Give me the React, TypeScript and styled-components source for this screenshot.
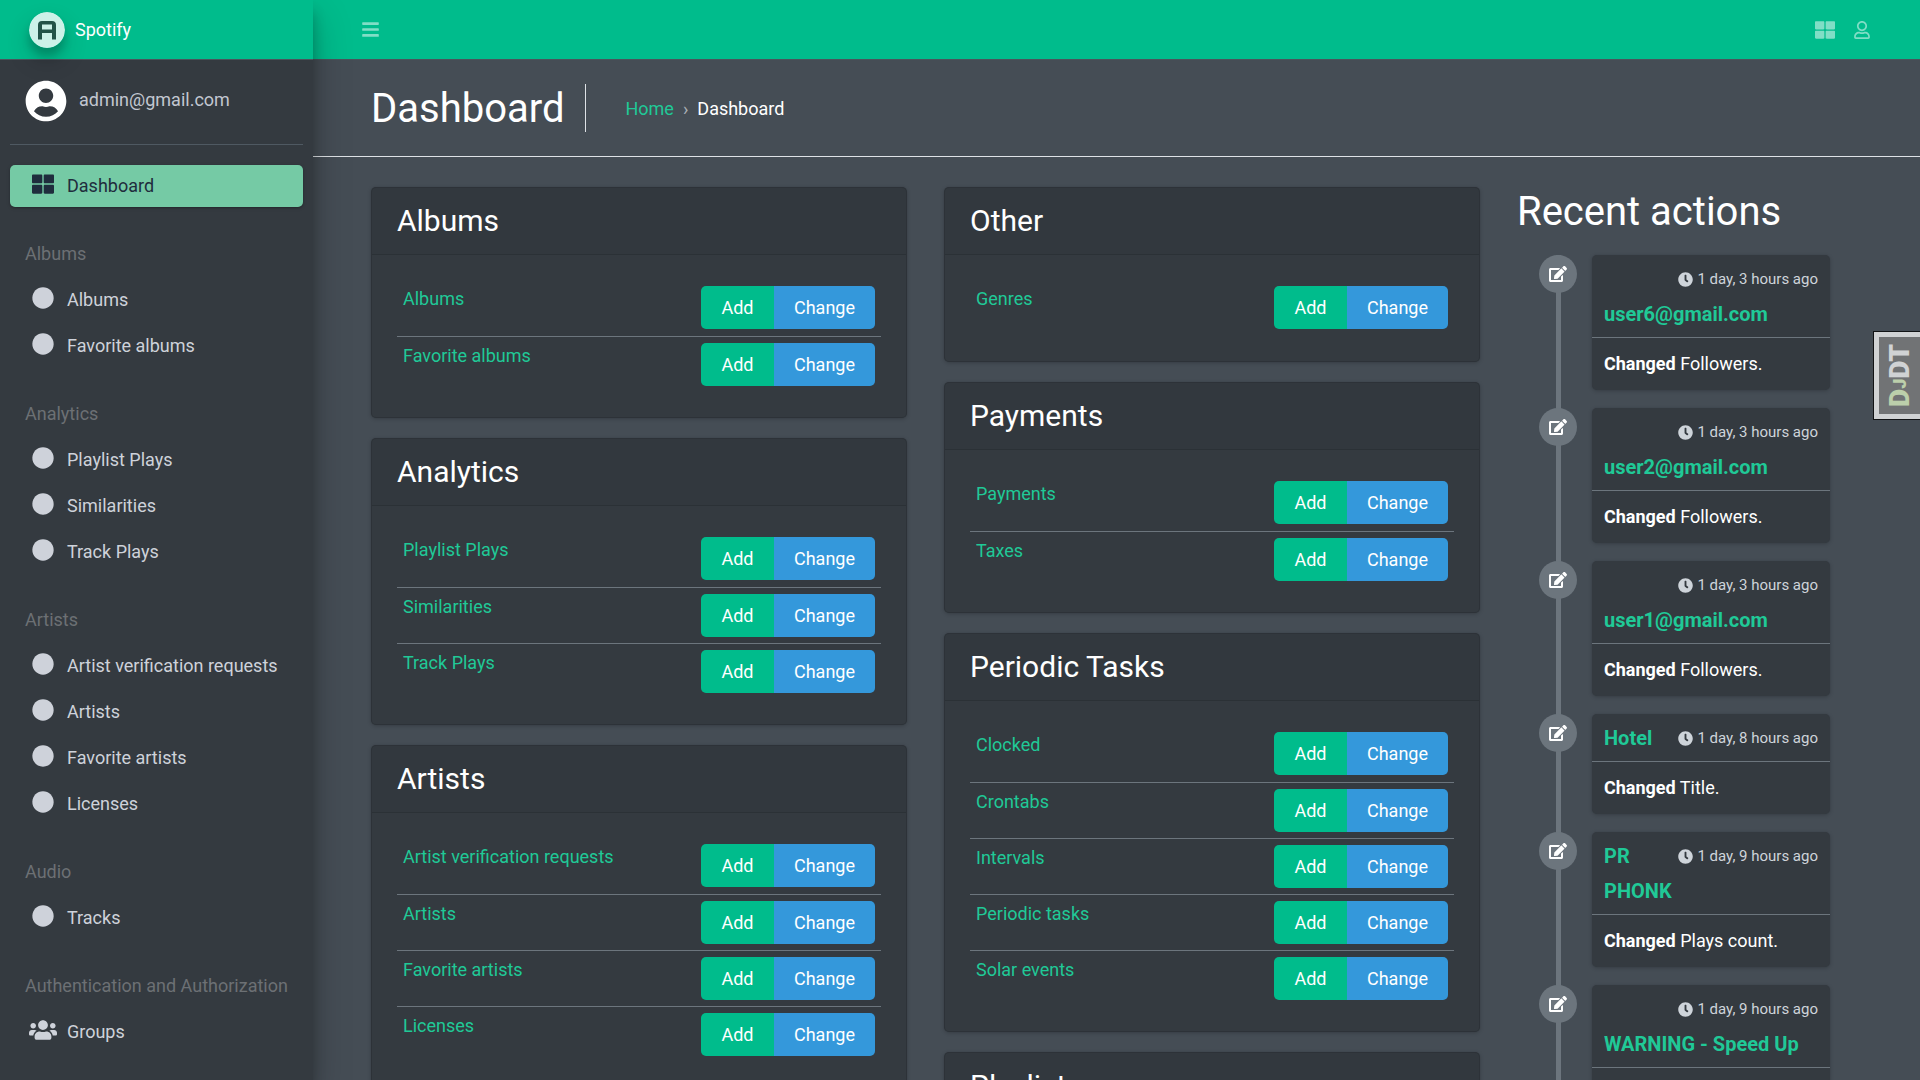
import React from 'react';
import styled, { createGlobalStyle } from 'styled-components';
import {
  FaBars,
  FaCircle,
  FaClock,
  FaEdit,
  FaRegUser,
  FaThLarge,
  FaUserCircle,
  FaUsers,
} from 'react-icons/fa';

const GlobalStyle = createGlobalStyle`
  *, *::before, *::after { box-sizing: border-box; }
  html, body { margin: 0; height: 100%; }
  body {
    background: #454d55;
    color: #fff;
    font: 400 18px/26px Roboto, "Liberation Sans", sans-serif;
  }
  h1, h2, h3, p, ul { margin: 0; padding: 0; font-weight: 400; }
  ul { list-style: none; }
  a { color: #20c997; text-decoration: none; }
  button { font: inherit; cursor: pointer; }
`;

const Shell = styled.div`
  display: grid;
  grid-template-columns: 313px minmax(0, 1fr);
  height: 100vh;
  overflow: hidden;
`;

const Sidebar = styled.aside`
  z-index: 1;
  overflow: hidden;
  background: #343a40;
  box-shadow: 0 18px 35px rgba(0, 0, 0, 0.25), 0 12px 12px rgba(0, 0, 0, 0.22);
`;

const Brand = styled.a`
  display: flex;
  align-items: center;
  gap: 10px;
  height: 60px;
  padding: 0 29px;
  background: #00bc8c;
  border-bottom: 1px solid #4b545c;
  color: #fff;
`;

const Logo = styled.svg`
  width: 36px;
  height: 36px;
  border-radius: 50%;
  opacity: 0.8;
  box-shadow: 0 12px 25px rgba(0, 0, 0, 0.19), 0 8px 8px rgba(0, 0, 0, 0.23);
`;

const UserPanel = styled.div`
  display: flex;
  align-items: center;
  gap: 12px;
  height: 85px;
  margin: 0 10px;
  padding: 0 15px 3px;
  border-bottom: 1px solid #4f5962;
`;

const UserLink = styled.a`
  padding-bottom: 1px;
  color: #c2c7d0;
`;

const Nav = styled.nav`
  padding: 20px 10px;
`;

const NavHeading = styled.li`
  height: 68px;
  padding: 30px 15px 12px;
  color: #6c7074;
  white-space: nowrap;
`;

const NavItem = styled.li`
  margin-bottom: 4px;
`;

const NavLink = styled.a<{ $active?: boolean }>`
  display: flex;
  align-items: center;
  gap: 8px;
  height: 42px;
  padding: 0 17px 1px;
  border-radius: 5px;
  color: ${(p) => (p.$active ? '#1f2d3d' : '#ced2da')};
  background: ${(p) => (p.$active ? '#75caa5' : 'transparent')};
  box-shadow: ${(p) =>
    p.$active ? '0 1px 4px rgba(0,0,0,.12), 0 1px 2px rgba(0,0,0,.24)' : 'none'};
`;

const NavIcon = styled.span`
  display: flex;
  justify-content: center;
  width: 32px;
  padding-bottom: 3px;
`;

const Main = styled.div`
  display: flex;
  flex-direction: column;
  min-width: 0;
  height: 100vh;
`;

const TopBar = styled.header`
  display: flex;
  flex: none;
  align-items: center;
  justify-content: space-between;
  height: 60px;
  padding: 0 49px 0 48px;
  background: #00bc8c;
  border-bottom: 1px solid #4b545c;
`;

const BarGroup = styled.div`
  display: flex;
  align-items: center;
  gap: 18px;
`;

const IconButton = styled.button`
  display: flex;
  padding: 0;
  border: 0;
  background: none;
  color: rgba(255, 255, 255, 0.5);
`;

const PageHeader = styled.div`
  display: flex;
  flex: none;
  align-items: center;
  padding: 24px 58px;
  border-bottom: 1px solid #dee2e6;
`;

const PageTitle = styled.h1`
  padding: 2px 21px 0 0;
  border-right: 1px solid #dee2e6;
  font-size: 40px;
  line-height: 46px;
`;

const Crumbs = styled.nav`
  display: flex;
  gap: 9px;
  padding: 1px 0 0 39px;
`;

const CrumbSeparator = styled.span`
  color: #aab0b6;
`;

const Content = styled.main`
  display: grid;
  flex: 1;
  grid-template-columns: 3fr 3fr 2fr;
  align-items: start;
  min-height: 0;
  padding: 30px 39px 0 40px;
  overflow-y: auto;
  scrollbar-width: none;
`;

const Column = styled.div`
  display: flex;
  flex-direction: column;
  gap: 20px;
  min-width: 0;
  padding: 0 19px 0 18px;
`;

const Card = styled.section`
  border: 1px solid rgba(0, 0, 0, 0.125);
  border-radius: 5px;
  background: #343a40;
  box-shadow: 0 0 1px rgba(0, 0, 0, 0.125), 0 1px 4px rgba(0, 0, 0, 0.2);
`;

const CardTitle = styled.h2`
  padding: 15px 25px;
  border-bottom: 1px solid rgba(0, 0, 0, 0.125);
  background: rgba(0, 0, 0, 0.03);
  font-size: 30px;
  line-height: 36px;
`;

const CardBody = styled.div`
  padding: 25px;
`;

const Table = styled.table`
  width: 100%;
  border-collapse: separate;
  border-spacing: 0;
`;

const Row = styled.tr`
  & > * {
    height: 56px;
    padding: 6px;
    border-top: 1px solid #6c757d;
    text-align: left;
    font-weight: 400;
    vertical-align: top;
  }
  &:first-child > * {
    border-top: 0;
  }
`;

const ActionCell = styled.td`
  width: 186px;
`;

const ButtonGroup = styled.div`
  display: flex;
  overflow: hidden;
  border-radius: 5px;
`;

const ActionButton = styled.button<{ $kind: 'add' | 'change' }>`
  flex: ${(p) => (p.$kind === 'add' ? '0 0 73px' : '1')};
  height: 43px;
  padding: 0;
  border: 0;
  background: ${(p) => (p.$kind === 'add' ? '#00bc8c' : '#3498db')};
  color: #fff;
`;

const SectionTitle = styled.h2`
  font-size: 40px;
  line-height: 50px;
`;

const RecentColumn = styled(Column)`
  gap: 18px;
`;

const Timeline = styled.ul`
  position: relative;
  display: flex;
  flex-direction: column;
  gap: 18px;
  padding-bottom: 18px;
  &::before {
    content: '';
    position: absolute;
    top: 0;
    bottom: 0;
    left: 39px;
    width: 5px;
    background: #6c757d;
  }
`;

const Entry = styled.li`
  display: flex;
  align-items: flex-start;
  gap: 15px;
  padding: 0 32px 0 22px;
`;

const EntryIcon = styled.span`
  z-index: 1;
  display: flex;
  flex: none;
  align-items: center;
  justify-content: center;
  width: 38px;
  height: 38px;
  border-radius: 50%;
  background: #6c757d;
`;

const EntryCard = styled.article`
  flex: 1;
  min-width: 0;
  border-radius: 5px;
  background: #343a40;
  box-shadow: 0 0 1px rgba(0, 0, 0, 0.125), 0 1px 4px rgba(0, 0, 0, 0.2);
`;

const EntryTime = styled.span`
  float: right;
  display: flex;
  align-items: center;
  gap: 4px;
  padding-left: 12px;
  color: #ced4da;
  font-size: 15px;
  font-weight: 400;
  line-height: 35px;
`;

const EntryTitle = styled.h3`
  padding: 7px 12px 5px;
  border-bottom: 1px solid #6c757d;
  font-size: 20px;
  font-weight: 700;
  line-height: 35px;
`;

const EntryText = styled.p`
  padding: 13px 12px;
`;

const DebugHandle = styled.button`
  position: fixed;
  z-index: 2;
  top: 331px;
  right: 0;
  display: flex;
  align-items: center;
  justify-content: center;
  width: 47px;
  height: 89px;
  padding: 0;
  border: 1px solid #000;
  border-right: 0;
  background: #fff;
  opacity: 0.75;
`;

const DebugInner = styled.span`
  display: flex;
  align-items: center;
  justify-content: center;
  width: 100%;
  height: 100%;
  border: 5px solid #fff;
  border-right: 0;
  background: #808080;
`;

const DebugText = styled.span`
  writing-mode: vertical-rl;
  transform: rotate(180deg);
  color: #fff;
  font: 900 28px/36px Roboto, "Liberation Sans", sans-serif;
`;

const DebugAccent = styled.span<{ $small?: boolean }>`
  color: #e4fbc8;
  font-size: ${(p) => (p.$small ? '18px' : '28px')};
`;

const menu: { title: string; items: string[] }[] = [
  { title: 'Albums', items: ['Albums', 'Favorite albums'] },
  { title: 'Analytics', items: ['Playlist Plays', 'Similarities', 'Track Plays'] },
  {
    title: 'Artists',
    items: ['Artist verification requests', 'Artists', 'Favorite artists', 'Licenses'],
  },
  { title: 'Audio', items: ['Tracks'] },
  { title: 'Authentication and Authorization', items: ['Groups'] },
];

const leftCards = menu.slice(0, 3);

const rightCards = [
  { title: 'Other', items: ['Genres'] },
  { title: 'Payments', items: ['Payments', 'Taxes'] },
  {
    title: 'Periodic Tasks',
    items: ['Clocked', 'Crontabs', 'Intervals', 'Periodic tasks', 'Solar events'],
  },
  { title: 'Playlists', items: ['Favorite playlists', 'Playlists'] },
];

const actions = [
  { who: 'user6@gmail.com', time: '1 day, 3 hours ago', field: 'Followers.' },
  { who: 'user2@gmail.com', time: '1 day, 3 hours ago', field: 'Followers.' },
  { who: 'user1@gmail.com', time: '1 day, 3 hours ago', field: 'Followers.' },
  { who: 'Hotel', time: '1 day, 8 hours ago', field: 'Title.' },
  { who: 'PR PHONK', time: '1 day, 9 hours ago', field: 'Plays count.' },
  { who: 'WARNING - Speed Up', time: '1 day, 9 hours ago', field: 'Plays count.' },
];

function ModelCard({ title, items }: { title: string; items: string[] }) {
  return (
    <Card>
      <CardTitle>{title}</CardTitle>
      <CardBody>
        <Table aria-label={title}>
          <tbody>
            {items.map((item) => (
              <Row key={item}>
                <th scope="row">
                  <a href="#">{item}</a>
                </th>
                <ActionCell>
                  <ButtonGroup>
                    <ActionButton $kind="add">Add</ActionButton>
                    <ActionButton $kind="change">Change</ActionButton>
                  </ButtonGroup>
                </ActionCell>
              </Row>
            ))}
          </tbody>
        </Table>
      </CardBody>
    </Card>
  );
}

export default function App() {
  return (
    <>
      <GlobalStyle />
      <Shell>
        <Sidebar>
          <Brand href="#">
            <Logo viewBox="0 0 36 36" aria-hidden="true">
              <circle cx="18" cy="18" r="18" fill="#fff" />
              <path
                d="M9 27.5V13q0-4 4-4h10q4 0 4 4v14.500h-4v-6.500H13v6.500zM13 12.500v5h10v-5z"
                fill="#2b3a38"
                fillRule="evenodd"
              />
            </Logo>
            Spotify
          </Brand>
          <UserPanel>
            <FaUserCircle size={42} />
            <UserLink href="#">admin@gmail.com</UserLink>
          </UserPanel>
          <Nav>
            <ul>
              <NavItem>
                <NavLink href="#" $active>
                  <NavIcon>
                    <FaThLarge size={22} />
                  </NavIcon>
                  Dashboard
                </NavLink>
              </NavItem>
              {menu.map((group) => (
                <React.Fragment key={group.title}>
                  <NavHeading>{group.title}</NavHeading>
                  {group.items.map((item) => (
                    <NavItem key={item}>
                      <NavLink href="#">
                        <NavIcon>
                          {item === 'Groups' ? <FaUsers size={28} /> : <FaCircle size={22} />}
                        </NavIcon>
                        {item}
                      </NavLink>
                    </NavItem>
                  ))}
                </React.Fragment>
              ))}
            </ul>
          </Nav>
        </Sidebar>
        <Main>
          <TopBar>
            <IconButton aria-label="Toggle menu">
              <FaBars size={19} />
            </IconButton>
            <BarGroup>
              <IconButton aria-label="Applications">
                <FaThLarge size={20} />
              </IconButton>
              <IconButton aria-label="Account">
                <FaRegUser size={18} />
              </IconButton>
            </BarGroup>
          </TopBar>
          <PageHeader>
            <PageTitle>Dashboard</PageTitle>
            <Crumbs aria-label="Breadcrumb">
              <a href="#">Home</a>
              <CrumbSeparator>›</CrumbSeparator>
              <span>Dashboard</span>
            </Crumbs>
          </PageHeader>
          <Content>
            <Column>
              {leftCards.map((card) => (
                <ModelCard key={card.title} {...card} />
              ))}
            </Column>
            <Column>
              {rightCards.map((card) => (
                <ModelCard key={card.title} {...card} />
              ))}
            </Column>
            <RecentColumn>
              <SectionTitle>Recent actions</SectionTitle>
              <Timeline>
                {actions.map((action) => (
                  <Entry key={action.who}>
                    <EntryIcon>
                      <FaEdit size={18} />
                    </EntryIcon>
                    <EntryCard>
                      <EntryTitle>
                        <EntryTime>
                          <FaClock size={15} />
                          {action.time}
                        </EntryTime>
                        <a href="#">{action.who}</a>
                      </EntryTitle>
                      <EntryText>
                        <b>Changed</b> {action.field}
                      </EntryText>
                    </EntryCard>
                  </Entry>
                ))}
              </Timeline>
            </RecentColumn>
          </Content>
        </Main>
      </Shell>
      <DebugHandle aria-label="DJDT">
        <DebugInner>
          <DebugText>
            <DebugAccent>D</DebugAccent>
            <DebugAccent $small>J</DebugAccent>DT
          </DebugText>
        </DebugInner>
      </DebugHandle>
    </>
  );
}
